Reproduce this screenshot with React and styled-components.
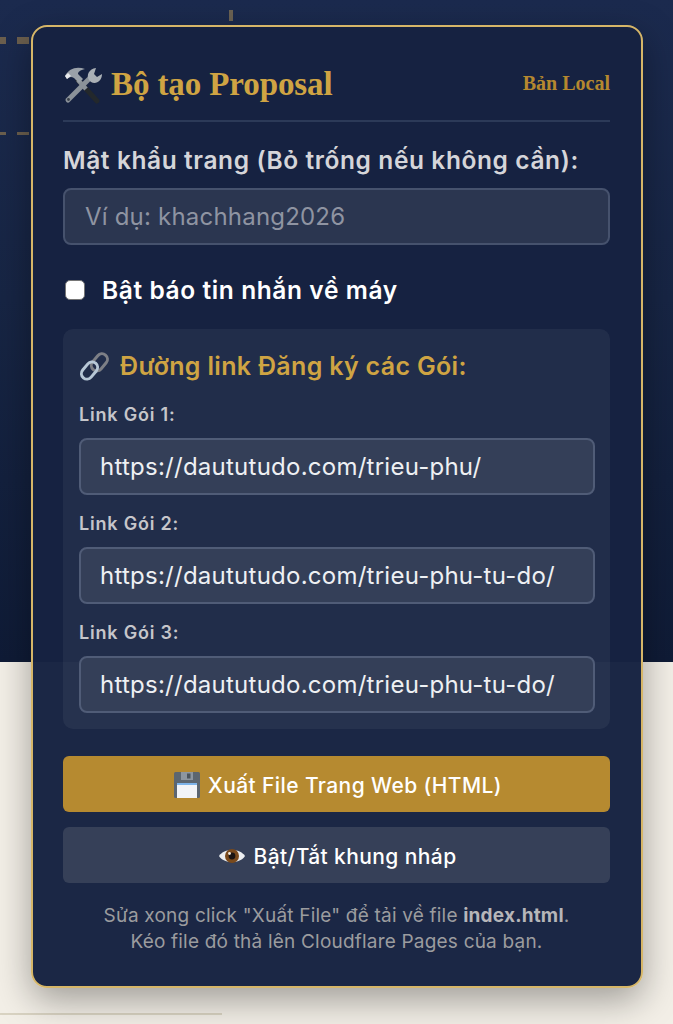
import React from "react";
import styled, { createGlobalStyle } from "styled-components";

const GlobalStyle = createGlobalStyle`
  html, body {
    margin: 0;
    padding: 0;
    background: #f3efe7;
  }
  * {
    box-sizing: border-box;
  }
`;

const ToolsIcon = () => (
  <svg width="40" height="40" viewBox="0 0 40 40">
    <path d="M15 15 L34 36" stroke="#23282c" strokeWidth="5" strokeLinecap="round" />
    <path d="M15 15 L23 24" stroke="#8b9299" strokeWidth="4.5" />
    <path d="M5 35 L27 13" stroke="#8b9299" strokeWidth="5" strokeLinecap="round" />
    <circle cx="5.5" cy="34.5" r="1.4" fill="#39404a" />
    <path d="M26 15 C23 10 26 4 33 3 L31 9 L34 12 L39 9 C39 16 33 20 28 17 Z" fill="#aab0b6" />
    <path d="M2 11 C6 3 14 1 22 4 C17 5 15 7 15 9 L20 14 L16 18 L11 13 C8 11 6 12 4 14 Z" fill="#9aa1a8" />
    <path d="M2 11 L5 8 L8 11 L4 14 Z" fill="#e8ebee" />
  </svg>
);

const LinkIcon = () => (
  <svg width="32" height="32" viewBox="0 0 32 32" fill="none">
    <rect x="15" y="2.5" width="11" height="19" rx="5.5" transform="rotate(40 20 12)" stroke="#7d7f86" strokeWidth="3" />
    <rect x="5" y="11" width="11" height="19" rx="5.5" transform="rotate(40 10.5 20.5)" stroke="#b7c7d6" strokeWidth="3" />
  </svg>
);

const FloppyIcon = () => (
  <svg width="28" height="28" viewBox="0 0 28 28">
    <rect x="1" y="1" width="26" height="26" rx="1.5" fill="#5c6670" />
    <rect x="8" y="1" width="12" height="8" fill="#8d96a0" />
    <rect x="14" y="2.5" width="3.5" height="5" fill="#4b545d" />
    <rect x="4" y="12" width="20" height="15" fill="#f2f4f7" />
    <rect x="4" y="12" width="20" height="2" fill="#7db4ea" />
  </svg>
);

const EyeIcon = () => (
  <svg width="28" height="28" viewBox="0 0 28 28">
    <path d="M1 14 C6 6 22 6 27 14 C22 22 6 22 1 14 Z" fill="#eceef0" />
    <circle cx="14" cy="14" r="7" fill="#7a4a1c" />
    <circle cx="14" cy="14" r="3.4" fill="#1a1412" />
    <circle cx="11.5" cy="11.5" r="1.4" fill="#f3e9dc" />
  </svg>
);

const App = () => {
  return (
    <Page>
      <GlobalStyle />
      <Hero>
        <Tick />
        <DashRow $top={37} $height={7} />
        <DashRow $top={132} $height={3} />
      </Hero>
      <Lower>
        <BottomRule />
      </Lower>
      <Panel>
        <PanelHeader>
          <PanelTitle>
            <ToolsIcon />
            Bộ tạo Proposal
          </PanelTitle>
          <Version>Bản Local</Version>
        </PanelHeader>

        <FieldLabel htmlFor="page-password">Mật khẩu trang (Bỏ trống nếu không cần):</FieldLabel>
        <TextInput id="page-password" placeholder="Ví dụ: khachhang2026" />

        <CheckRow>
          <Check type="checkbox" />
          Bật báo tin nhắn về máy
        </CheckRow>

        <LinkGroup>
          <GroupTitle>
            <LinkIcon />
            Đường link Đăng ký các Gói:
          </GroupTitle>
          <LinkLabel>Link Gói 1:</LinkLabel>
          <LinkInput defaultValue="https://daututudo.com/trieu-phu/" />
          <LinkLabel>Link Gói 2:</LinkLabel>
          <LinkInput defaultValue="https://daututudo.com/trieu-phu-tu-do/" />
          <LinkLabel>Link Gói 3:</LinkLabel>
          <LinkInput defaultValue="https://daututudo.com/trieu-phu-tu-do/" />
        </LinkGroup>

        <ActionButton $primary>
          <FloppyIcon />
          Xuất File Trang Web (HTML)
        </ActionButton>
        <ActionButton>
          <EyeIcon />
          Bật/Tắt khung nháp
        </ActionButton>

        <Note>
          Sửa xong click "Xuất File" để tải về file <b>index.html</b>.
          <br />
          Kéo file đó thả lên Cloudflare Pages của bạn.
        </Note>
      </Panel>
    </Page>
  );
};

const Page = styled.div`
  position: relative;
  width: 673px;
  height: 1024px;
  overflow: hidden;
  font-family: Inter, "Noto Sans", sans-serif;
`;

const Hero = styled.div`
  position: relative;
  height: 662px;
  background: linear-gradient(180deg, #1b2a4e 0%, #172544 45%, #0f1b36 100%);
`;

const Tick = styled.div`
  position: absolute;
  top: 10px;
  left: 229px;
  width: 4px;
  height: 11px;
  background: #6b6253;
`;

const DashRow = styled.div`
  position: absolute;
  top: ${(p) => p.$top}px;
  left: -6px;
  width: 37px;
  height: ${(p) => p.$height}px;
  background: repeating-linear-gradient(90deg, #6b5f4e 0 12px, transparent 12px 23px);
`;

const Lower = styled.div`
  position: relative;
  height: 362px;
  background: #f3efe7;
`;

const BottomRule = styled.div`
  position: absolute;
  top: 351px;
  left: 0;
  width: 222px;
  height: 2px;
  background: #d9d3c2;
`;

const Panel = styled.section`
  position: absolute;
  top: 25px;
  left: 31px;
  width: 612px;
  height: 963px;
  padding: 30px 31px 0 30px;
  background: rgba(22, 35, 65, 0.98);
  border: 2px solid #d6b668;
  border-radius: 16px;
  box-shadow: 0 12px 36px rgba(0, 0, 0, 0.35);
`;

const PanelHeader = styled.header`
  display: flex;
  justify-content: space-between;
  align-items: center;
  height: 65px;
  padding-bottom: 8px;
  border-bottom: 2px solid #2c3a58;
`;

const PanelTitle = styled.h2`
  display: flex;
  align-items: center;
  gap: 8px;
  margin: 0;
  font-family: "Liberation Serif", serif;
  font-size: 33px;
  font-weight: 700;
  letter-spacing: -0.1px;
  color: #cfa443;
`;

const Version = styled.span`
  margin-bottom: 2px;
  font-family: "Liberation Serif", serif;
  font-size: 20px;
  font-weight: 700;
  color: #b5882f;
`;

const FieldLabel = styled.label`
  display: block;
  margin-top: 21px;
  font-size: 24.5px;
  font-weight: 600;
  letter-spacing: 0.6px;
  line-height: 34px;
  color: #d5d5d9;
`;

const TextInput = styled.input`
  display: block;
  width: 100%;
  height: 57px;
  margin-top: 11px;
  padding: 0 19px 0 20px;
  font-family: inherit;
  font-size: 24px;
  letter-spacing: 0.2px;
  color: #fff;
  background: #2b3650;
  border: 2px solid #46526d;
  border-radius: 8px;
  outline: none;

  &::placeholder {
    color: #8f94a2;
  }
`;

const CheckRow = styled.label`
  display: flex;
  align-items: center;
  gap: 17px;
  margin-top: 28px;
  padding-left: 2px;
  height: 34px;
  font-size: 24.5px;
  font-weight: 600;
  letter-spacing: 0.6px;
  color: #fff;
`;

const Check = styled.input`
  appearance: none;
  width: 20px;
  height: 20px;
  margin: 0;
  background: #fff;
  border: 1px solid #767676;
  border-radius: 5px;
`;

const LinkGroup = styled.div`
  margin-top: 22px;
  padding: 16px 15px 16px 16px;
  background: rgba(255, 255, 255, 0.05);
  border-radius: 10px;
`;

const GroupTitle = styled.h3`
  display: flex;
  align-items: center;
  gap: 9px;
  margin: 0 0 -1px;
  height: 42px;
  font-size: 25px;
  font-weight: 600;
  letter-spacing: 0.33px;
  color: #cfa443;
`;

const LinkLabel = styled.label`
  display: block;
  margin: 16px 0 11px;
  height: 25px;
  font-size: 18px;
  line-height: 25px;
  font-weight: 600;
  letter-spacing: 0.8px;
  color: #c6c6ca;
`;

const LinkInput = styled.input`
  display: block;
  width: 100%;
  height: 57px;
  padding: 0 19px;
  font-family: inherit;
  font-size: 24px;
  letter-spacing: 0.25px;
  color: #eef0f3;
  background: #343f58;
  border: 2px solid #505c77;
  border-radius: 8px;
  outline: none;
`;

const ActionButton = styled.button`
  display: flex;
  align-items: center;
  justify-content: center;
  gap: 7px;
  width: 100%;
  height: 56px;
  margin-top: ${(p) => (p.$primary ? "27px" : "15px")};
  padding: 2px 0 0 2px;
  font-family: inherit;
  font-size: 21px;
  font-weight: 500;
  letter-spacing: 0.4px;
  color: #fff;
  background: ${(p) => (p.$primary ? "#b68a30" : "#364058")};
  border: none;
  border-radius: 6px;
`;

const Note = styled.p`
  margin: 20px 0 0;
  font-size: 19px;
  letter-spacing: 0.2px;
  line-height: 26px;
  text-align: center;
  color: #9b9c9f;

  b {
    font-weight: 700;
    color: #b6b6b9;
  }
`;

export default App;
